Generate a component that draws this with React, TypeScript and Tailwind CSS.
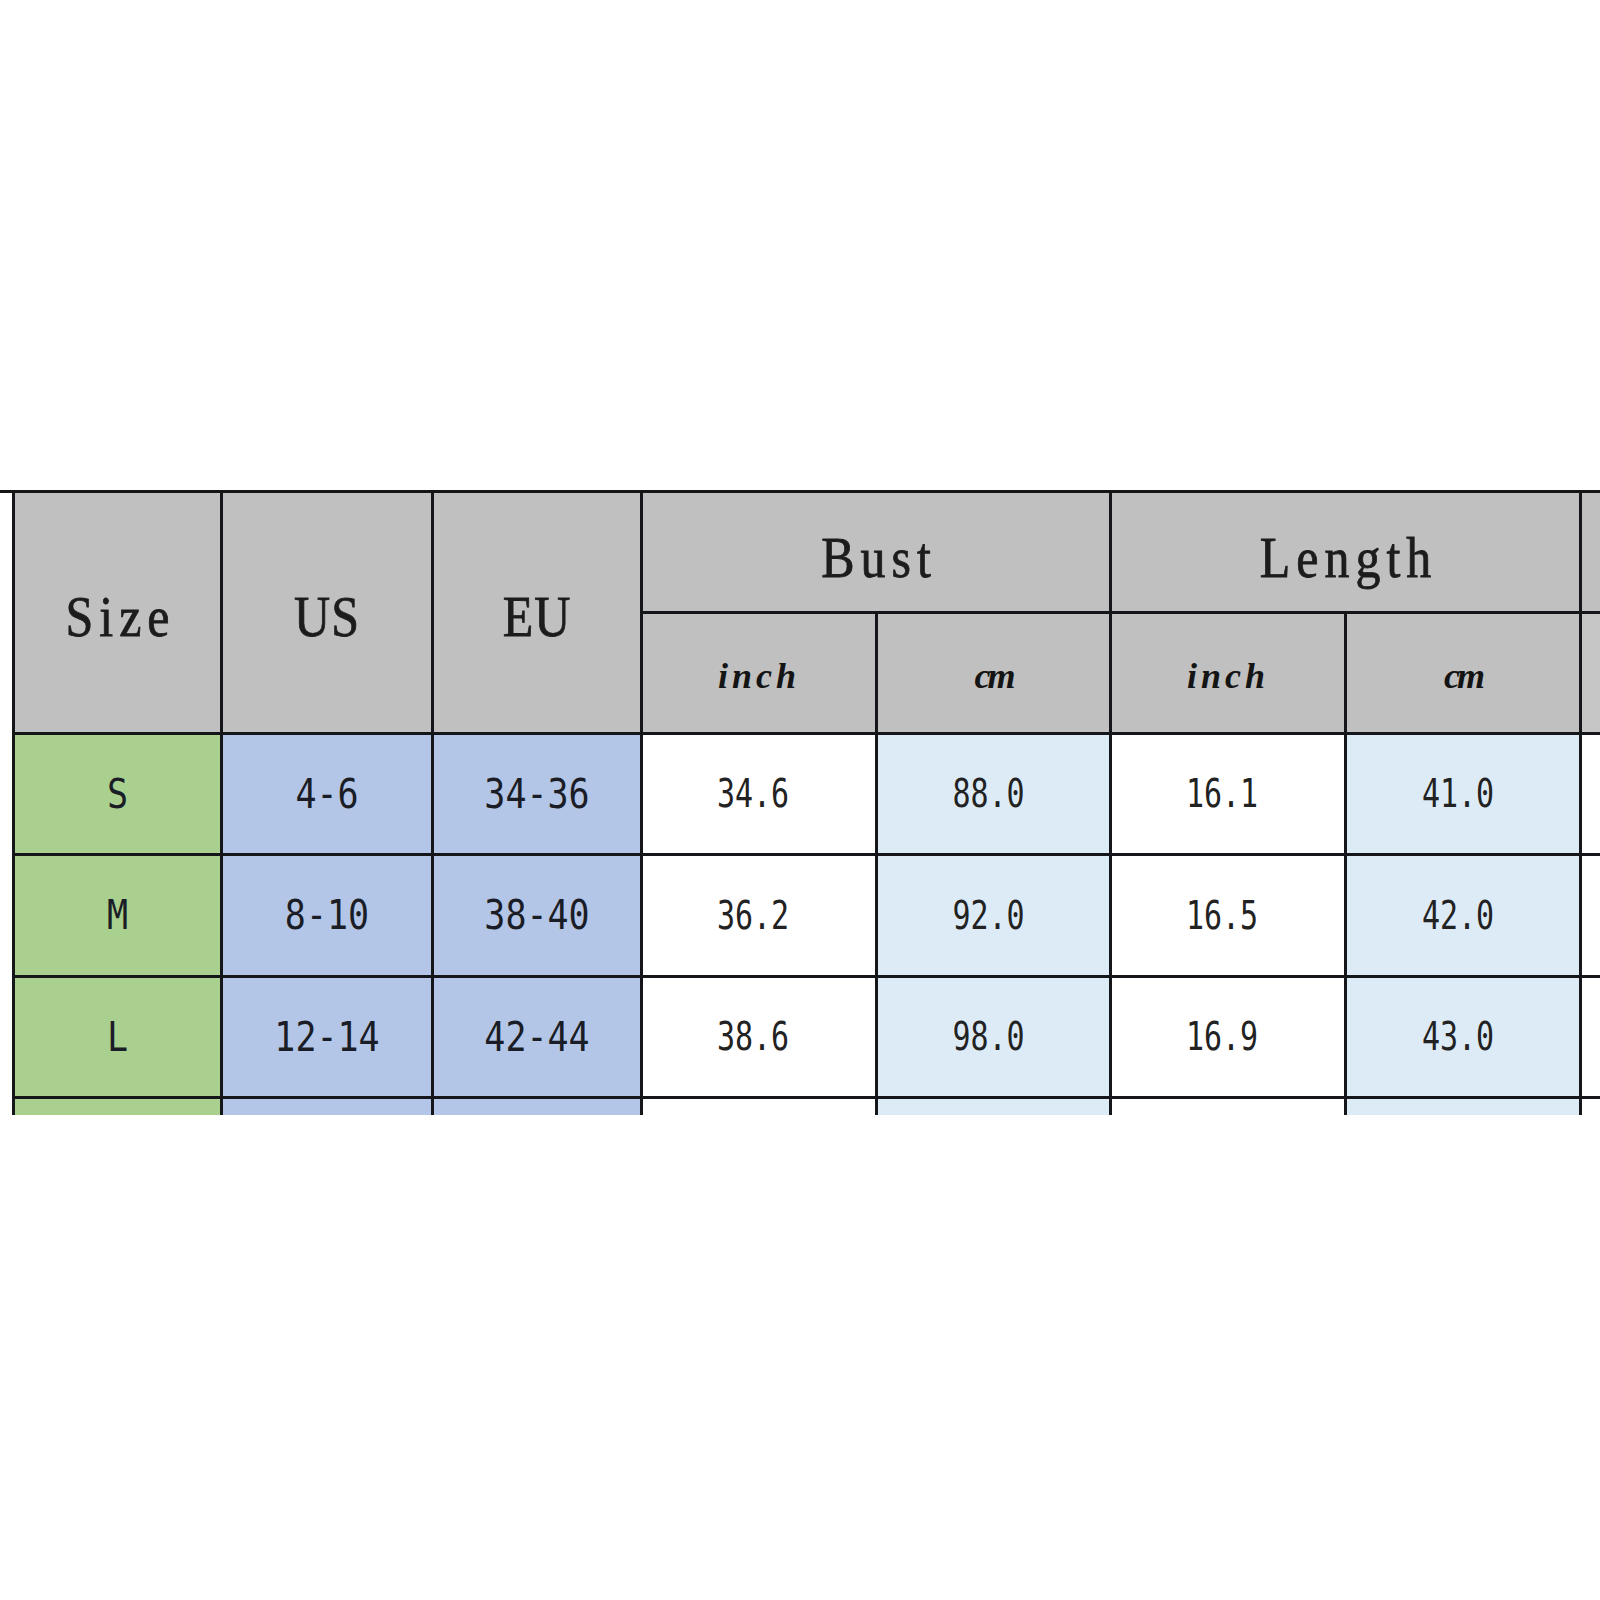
const head = "font-['Liberation_Serif','DejaVu_Serif',serif] text-[50px] leading-none text-[#1c1c1c] [-webkit-text-stroke:0.7px_#1c1c1c] inline-block scale-y-[1.12]";
const unit = "font-['Liberation_Serif','DejaVu_Serif',serif] italic font-bold text-[36px] leading-none text-[#141414]";
const range = "font-['DejaVu_Sans_Mono',monospace] text-[35px] leading-none text-[#1a1d26] inline-block scale-y-[1.15]";
const value = "font-['DejaVu_Sans_Mono',monospace] text-[30px] leading-none text-[#222222] inline-block scale-y-[1.3]";

const rows = [
  { size: 'S', us: '4-6', eu: '34-36', bi: '34.6', bc: '88.0', li: '16.1', lc: '41.0' },
  { size: 'M', us: '8-10', eu: '38-40', bi: '36.2', bc: '92.0', li: '16.5', lc: '42.0' },
  { size: 'L', us: '12-14', eu: '42-44', bi: '38.6', bc: '98.0', li: '16.9', lc: '43.0' },
  { size: '', us: '', eu: '', bi: '', bc: '', li: '', lc: '' },
];

function Cell({ bg, className = '', children }: { bg: string; className?: string; children?: React.ReactNode }) {
  return <div className={`flex items-center justify-center ${bg} ${className}`}>{children}</div>;
}

export default function App() {
  return (
    <div className="w-[1600px] h-[1600px] overflow-hidden bg-white">
      <div className="pt-[490px]">
        <div className="h-[625px] overflow-hidden border-t-[3px] border-[#151515]">
          <div className="ml-[12px] w-[2000px] grid gap-[3px] bg-[#151619] pl-[3px] grid-cols-[205px_208px_206px_232px_231px_232px_232px_232px_232px] grid-rows-[118px_118px_118px_119px_118px_118px]">
            {/* header */}
            <Cell bg="bg-[#c0c0c0]" className="row-span-2 pt-[8px]">
              <span className={`${head} tracking-[6px] pl-[6px]`}>Size</span>
            </Cell>
            <Cell bg="bg-[#c0c0c0]" className="row-span-2 pt-[8px]">
              <span className={`${head} tracking-[1px]`}>US</span>
            </Cell>
            <Cell bg="bg-[#c0c0c0]" className="row-span-2 pt-[8px]">
              <span className={`${head} tracking-[1px]`}>EU</span>
            </Cell>
            <Cell bg="bg-[#c0c0c0]" className="col-span-2 pt-[12px]">
              <span className={`${head} tracking-[6px] pl-[6px]`}>Bust</span>
            </Cell>
            <Cell bg="bg-[#c0c0c0]" className="col-span-2 pt-[12px]">
              <span className={`${head} tracking-[6px] pl-[6px]`}>Length</span>
            </Cell>
            <Cell bg="bg-[#c0c0c0]" className="col-span-2" />

            <Cell bg="bg-[#c0c0c0]" className="pt-[6px]">
              <span className={`${unit} tracking-[4px]`}>inch</span>
            </Cell>
            <Cell bg="bg-[#c0c0c0]" className="pt-[6px]">
              <span className={`${unit} tracking-[-3px]`}>cm</span>
            </Cell>
            <Cell bg="bg-[#c0c0c0]" className="pt-[6px]">
              <span className={`${unit} tracking-[4px]`}>inch</span>
            </Cell>
            <Cell bg="bg-[#c0c0c0]" className="pt-[6px]">
              <span className={`${unit} tracking-[-3px]`}>cm</span>
            </Cell>
            <Cell bg="bg-[#c6c6c6]" />
            <Cell bg="bg-[#c6c6c6]" />

            {/* body */}
            {rows.map((r, i) => (
              <div key={i} className="contents">
                <Cell bg="bg-[#a9d08e]">
                  <span className={range}>{r.size}</span>
                </Cell>
                <Cell bg="bg-[#b4c6e7]">
                  <span className={range}>{r.us}</span>
                </Cell>
                <Cell bg="bg-[#b4c6e7]">
                  <span className={range}>{r.eu}</span>
                </Cell>
                <Cell bg="bg-white" className="pr-[12px]">
                  <span className={value}>{r.bi}</span>
                </Cell>
                <Cell bg="bg-[#ddebf7]" className="pr-[10px]">
                  <span className={value}>{r.bc}</span>
                </Cell>
                <Cell bg="bg-white" className="pr-[12px]">
                  <span className={value}>{r.li}</span>
                </Cell>
                <Cell bg="bg-[#ddebf7]" className="pr-[10px]">
                  <span className={value}>{r.lc}</span>
                </Cell>
                <Cell bg="bg-white" />
                <Cell bg="bg-white" />
              </div>
            ))}
          </div>
        </div>
      </div>
    </div>
  );
}
